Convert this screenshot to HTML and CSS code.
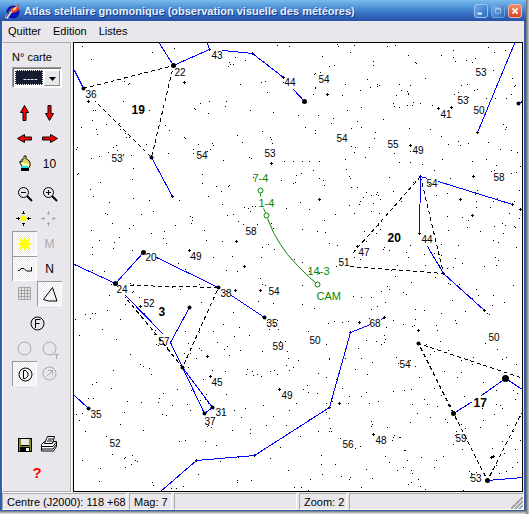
FILE: index.html
```html
<!DOCTYPE html>
<html lang="fr">
<head>
<meta charset="utf-8">
<title>Atlas stellaire gnomonique</title>
<link rel="stylesheet" href="styles.css">
</head>
<body>
<div class="window">
  <header class="titlebar">
    <svg class="logo" viewBox="0 0 16 16" aria-hidden="true"><circle cx="8" cy="9" r="6.500" fill="#0713b8"/><path d="M1 15L7 7" stroke="#d8d8e8" stroke-width="3"/><path d="M1 14L6 7" stroke="#223" stroke-width="1"/><path d="M6 5l4-1 4-3-1 4 2 1-4 3-4 1z" fill="#f0401c"/><path d="M8 6l4-3-1 3-3 2z" fill="#ffe9a0"/></svg>
    <h1>Atlas stellaire gnomonique (observation visuelle des météores)</h1>
    <div class="winbuttons">
      <button class="wb" aria-label="Réduire"><svg viewBox="0 0 14 14"><path d="M3 10h5" stroke="#fff" stroke-width="2"/></svg></button>
      <button class="wb dim" aria-label="Agrandir"><svg viewBox="0 0 14 14"><path d="M4 4.500h6v5H4z" fill="none" stroke="#a9c9f2"/><path d="M4 4h6" stroke="#a9c9f2" stroke-width="2"/></svg></button>
      <button class="wb close" aria-label="Fermer"><svg viewBox="0 0 14 14"><path d="M4 4l6 6M10 4l-6 6" stroke="#fff" stroke-width="2"/></svg></button>
    </div>
  </header>
  <nav class="menu"><button>Quitter</button><button>Edition</button><button>Listes</button></nav>
  <main>
    <aside class="tools">
      <label for="carte">N° carte</label>
      <div class="combo">
        <select id="carte"><option>----</option></select>
        <span class="drop"><svg viewBox="0 0 7 4"><path d="M0 0h7L3.500 4z"/></svg></span>
      </div>
      <div class="grid first">
        <button aria-label="Haut"><svg viewBox="0 0 25 25"><path d="M12.500 4.500l4 7h-2.500v8h-3v-8H8.500z" fill="red" stroke="#000"/></svg></button>
        <button aria-label="Bas"><svg viewBox="0 0 25 25"><path d="M12.500 19.500l4-7h-2.500v-8h-3v8H8.500z" fill="red" stroke="#000"/></svg></button>
        <button aria-label="Gauche"><svg viewBox="0 0 25 25"><path d="M5.500 12.500l7-4v2.500h7v3h-7v2.500z" fill="red" stroke="#000"/></svg></button>
        <button aria-label="Droite"><svg viewBox="0 0 25 25"><path d="M20.500 12.500l-7-4v2.500h-8v3h8v2.500z" fill="red" stroke="#000"/></svg></button>
        <button aria-label="Main"><svg viewBox="0 0 25 25"><path d="M10 18v-3l-2-3v-2l2 1V8h2V5h2v3l2 1 2 2v4l-2 3z" fill="#ffffa8" stroke="#000"/><path d="M12 6v6M14 8v4M16 10v3" stroke="#b9b000"/><path d="M9 15h7v2H9z" fill="#00e8f0"/><path d="M9 17h8v3H9z"/></svg></button>
        <button>10</button>
      </div>
      <div class="grid">
        <button aria-label="Zoom arrière"><svg viewBox="0 0 25 25" fill="none" stroke="#000"><circle cx="11.500" cy="11.500" r="5"/><path d="M9 11.500h5"/><path d="M15 15l5 5" stroke-width="2"/></svg></button>
        <button aria-label="Zoom avant"><svg viewBox="0 0 25 25" fill="none" stroke="#000"><circle cx="11.500" cy="11.500" r="5"/><path d="M9 11.500h5M11.500 9v5"/><path d="M15 15l5 5" stroke-width="2"/></svg></button>
        <button aria-label="Centrer"><svg viewBox="0 0 25 25"><circle cx="11.500" cy="12.500" r="3" fill="#ff0"/><path d="M11.500 5v3M11.500 17v3M4 12.500h4M15 12.500h4M10 7.500h3M10 17.500h3M6.500 11v3M16.500 11v3" stroke="#000"/></svg></button>
        <button aria-label="Recentrer" disabled><svg viewBox="0 0 25 25"><path d="M11.500 5v4M11.500 16v4M4 12.500h4M15 12.500h4M10 7.500h3M10 17.500h3M6.500 11v3M16.500 11v3" stroke="#aaa"/></svg></button>
        <button class="on" aria-label="Soleil"><svg viewBox="0 0 25 25"><circle cx="12.500" cy="13" r="4.500" fill="#ff0"/><path d="M12.500 6v14M5.500 13h14M7 7.500l11 11M18 7.500l-11 11" stroke="#ff0" stroke-width="1.500"/></svg></button>
        <button disabled>M</button>
        <button class="on" aria-label="Trajectoire"><svg viewBox="0 0 25 25"><path d="M6 14.500h1.500l1.500-2h3l2.500 2.500h5v-4" fill="none" stroke="#000"/></svg></button>
        <button>N</button>
        <button aria-label="Grille" disabled><svg viewBox="0 0 25 25"><path d="M6.500 6.500h12v12h-12zM9.500 6v12M12.500 6v12M15.500 6v12M6 9.500h12M6 12.500h12M6 15.500h12" fill="none" stroke="#a4a4a4"/></svg></button>
        <button class="on" aria-label="Triangle"><svg viewBox="0 0 25 25"><path d="M15.500 6.500L6.500 18.500l5 1.500 8.500 0z" fill="none" stroke="#000"/></svg></button>
      </div>
      <div class="grid">
        <button class="wide" aria-label="F"><svg viewBox="0 0 25 25" fill="none" stroke="#000"><circle cx="12.500" cy="12.500" r="6.500"/><path d="M10.500 17V8.500h5M10.500 12.500h4"/></svg></button>
        <button aria-label="Cercle" disabled><svg viewBox="0 0 25 25" fill="none" stroke="#aaa"><circle cx="12.500" cy="12.500" r="6.500"/></svg></button>
        <button aria-label="Cercle T" disabled><svg viewBox="0 0 25 25" fill="none" stroke="#aaa"><circle cx="12.500" cy="12.500" r="6.500"/><path d="M17 18.500h5M19.500 18v5"/></svg></button>
        <button class="on" aria-label="D"><svg viewBox="0 0 25 25" fill="none" stroke="#000"><circle cx="13.500" cy="13.500" r="6.500"/><path d="M11.500 9.500h2l2.500 2.500v3l-2.500 2.500h-2z"/></svg></button>
        <button aria-label="Direction" disabled><svg viewBox="0 0 25 25" fill="none" stroke="#aaa"><circle cx="12.500" cy="12.500" r="6.500"/><path d="M9.500 15.500l6-6M11 9.500h4.500V14"/></svg></button>
      </div>
      <div class="grid files">
        <button aria-label="Enregistrer"><svg viewBox="0 0 25 25"><path d="M6 6h14v14H6z"/><path d="M7 7h2v7h8V7h2v12h-1v-4H8v4H7z" fill="#8a8a1a"/><path d="M9 7h8v6H9z" fill="#e9e7ec"/><path d="M14 16h3v3h-3z" fill="#fff"/></svg></button>
        <button aria-label="Imprimer"><svg viewBox="0 0 25 25" fill="#fff" stroke="#000"><path d="M4.500 12.500l3-3h12v5l-3 4.500h-12z"/><path d="M7.500 11.500l3-7h7l-2 7z"/><path d="M11 7h5M10 9h5M5 14.500h11l3-4M5 17h11l3-4" fill="none"/></svg></button>
        <button class="wide help" aria-label="Aide">?</button>
      </div>
    </aside>
    <section class="map" aria-label="Carte du ciel">
      <svg viewBox="73.500 42.500 448 448" preserveAspectRatio="xMinYMin slice">
        <!-- faint stars -->
        <path class="dots" d="M82 46zM91 59zM152 52zM174 48zM124 81zM128 84zM129 83zM123 101zM93 110zM95 110zM149 110zM92 120zM81 127zM106 124zM119 123zM96 129zM97 134zM120 129zM125 133zM129 137zM77 147zM76 149zM113 147zM116 145zM117 150zM108 152zM99 156zM91 158zM126 137zM131 155zM78 173zM77 174zM100 182zM90 189zM93 196zM109 202zM133 168zM132 179zM133 198zM149 200zM105 213zM107 214zM153 211zM141 214zM190 216zM192 217zM194 108zM195 109zM200 103zM209 101zM225 106zM208 113zM165 125zM169 130zM146 144zM168 153zM184 137zM185 138zM198 144zM212 143zM213 145zM210 149zM207 151zM223 160zM202 174zM202 183zM216 186zM229 185zM221 191zM222 204zM179 200zM208 196zM227 215zM193 149zM193 153z
        M277 45zM289 46zM337 44zM338 46zM354 45zM350 52zM229 62zM230 64zM228 66zM233 64zM245 60zM235 57zM240 84zM261 82zM265 81zM283 82zM267 92zM226 101zM250 110zM273 112zM298 115zM318 115zM333 118zM347 110zM361 107zM367 79zM377 84zM379 85zM373 65zM373 61zM370 87zM360 90zM314 74zM315 73zM315 87zM315 88zM313 94zM322 56zM320 72zM334 65zM345 84zM342 95zM329 66zM262 131zM237 135zM242 142zM270 137zM271 139zM272 143zM305 127zM315 130zM315 133zM331 123zM351 128zM357 121zM361 127zM375 132zM374 138zM369 147zM355 147zM354 152zM351 146zM345 159zM365 157zM346 169zM349 176zM350 178zM383 119zM319 161zM309 161zM293 161zM284 161zM302 161zM313 170zM301 173zM296 175zM295 182zM293 183zM249 157zM251 158zM253 177zM281 180zM228 186zM244 207zM248 208zM250 211zM233 214zM252 206zM255 206zM286 208zM300 202zM323 180zM324 185zM309 209zM319 178zM351 187zM357 187zM366 192zM376 194zM371 195zM373 203zM363 197zM360 201zM359 204zM349 205zM354 213zM335 214zM371 211zM379 213z
        M387 46zM395 45zM408 55zM415 62zM416 63zM441 55zM455 61zM453 57zM453 50zM466 60zM472 62zM475 58zM488 47zM494 52zM505 50zM493 70zM512 78zM515 85zM425 78zM399 84zM401 90zM377 86zM410 85zM407 91zM408 93zM408 94zM396 95zM393 103zM394 106zM399 107zM407 105zM412 105zM413 102zM420 103zM432 105zM454 94zM458 92zM461 85zM467 84zM468 97zM474 90zM477 89zM486 98zM495 98zM506 98zM511 94zM514 86zM503 124zM506 127zM505 129zM500 149zM517 152zM488 142zM511 150zM430 129zM409 128zM441 136zM458 141zM468 143zM460 145zM448 144zM394 153zM399 162zM410 151zM389 177zM410 162zM422 164zM434 170zM442 159zM472 161zM486 159zM491 171zM494 170zM496 165zM511 173zM520 166zM516 172zM377 192zM378 195zM380 199zM393 191zM401 201zM413 182zM429 184zM436 195zM447 193zM450 178zM477 190zM475 194zM476 201zM476 207zM493 201zM490 207zM519 190zM514 201zM497 198zM509 213z
        M192 220zM191 223zM175 225zM164 231zM129 228zM133 225zM112 223zM119 237zM114 242zM113 248zM91 230zM99 240zM92 247zM92 254zM132 250zM151 233zM163 238zM166 243zM204 230zM206 240zM222 241zM190 257zM213 257zM185 269zM178 263zM92 270zM104 271zM111 284zM109 295zM130 283zM133 284zM133 291zM132 292zM172 287zM180 289zM199 284zM201 302zM139 297zM144 313zM125 304zM140 315zM92 313zM95 313zM85 314zM107 310zM90 318zM75 319zM120 319zM102 329zM79 335zM116 339zM155 330zM154 334zM156 344zM158 345zM167 347zM130 354zM113 370zM143 366zM149 368zM140 364zM151 374zM196 358zM188 367zM184 353zM190 353zM188 343zM199 332zM223 324zM213 331zM217 342zM224 349zM229 355zM225 371zM212 370zM226 394zM203 379zM191 390zM206 394zM111 388zM92 384zM96 382zM159 398zM163 393zM177 389zM208 403zM201 350zM185 331zM199 348z
        M238 221zM243 224zM257 224zM271 223zM302 229zM324 220zM317 231zM325 232zM329 243zM337 245zM273 228zM274 249zM268 244zM262 247zM261 257zM294 259zM302 262zM309 271zM319 273zM336 266zM360 259zM232 256zM226 270zM237 271zM262 284zM265 285zM302 285zM260 278zM226 291zM302 304zM314 308zM334 321zM342 322zM328 323zM308 331zM326 344zM348 321zM277 320zM267 322zM274 325zM269 329zM278 329zM239 327zM233 312zM245 304zM258 301zM273 303zM234 336zM249 335zM227 346zM280 341zM285 341zM287 351zM288 358zM240 350zM262 351zM298 360zM274 370zM252 371zM270 371zM247 369zM246 374zM257 374zM261 376zM253 375zM277 374zM286 365zM289 370zM293 367zM318 373zM326 377zM307 385zM308 392zM303 389zM317 393zM329 358zM329 359zM345 358zM355 369zM361 358zM372 362zM367 374zM342 388zM336 379zM349 396zM332 401zM326 403zM348 403zM361 396zM366 392zM378 401zM263 405zM245 408zM289 410zM326 412zM371 309zM353 296zM361 297zM371 297zM377 306zM384 335zM384 342zM366 340zM369 318zM358 348zM364 231zM380 229zM383 249zM366 241zM354 257z
        M376 233zM378 225zM384 247zM389 250zM406 252zM397 265zM410 245zM408 257zM424 254zM434 253zM441 244zM439 265zM447 268zM453 267zM462 263zM455 258zM458 245zM467 227zM468 220zM480 231zM494 226zM502 223zM503 233zM505 225zM493 240zM498 242zM495 257zM498 260zM484 266zM496 265zM516 247zM514 226zM515 227zM519 218zM447 216zM462 217zM448 230zM441 255zM391 270zM395 276zM387 286zM389 289zM381 291zM385 302zM403 292zM406 294zM411 282zM425 265zM435 277zM448 283zM450 284zM459 284zM476 289zM478 295zM472 298zM452 300zM441 313zM465 311zM455 320zM492 305zM489 314zM513 285zM504 302zM493 295zM487 313zM415 309zM424 310zM415 319zM414 325zM393 320zM403 324zM412 326zM436 325zM437 330zM456 323zM440 341zM448 350zM426 344zM430 354zM434 351zM386 327zM381 344zM385 339zM376 341zM396 357zM398 363zM410 360zM415 366zM444 371zM461 360zM467 359zM473 357zM472 364zM506 357zM502 359zM516 364zM497 349zM485 343zM419 377zM411 389zM393 391zM404 390zM434 388zM441 395zM437 406zM424 399zM412 404zM461 372zM457 377zM464 396zM483 382zM496 390zM515 399zM502 408zM496 404zM482 408zM513 390zM517 393z
        M88 398zM93 398zM82 413zM76 414zM79 420zM85 431zM127 401zM141 402zM158 402zM172 405zM187 404zM200 400zM205 399zM124 412zM120 424zM106 436zM143 430zM179 441zM162 414zM166 415zM190 410zM208 425zM211 427zM207 426zM241 417zM250 433zM250 429zM232 430zM224 412zM234 410zM185 440zM205 441zM216 445zM112 454zM124 458zM125 457zM132 455zM135 460zM137 461zM131 464zM125 467zM82 460zM100 468zM99 481zM152 482zM153 485zM176 488zM171 488zM183 486zM198 474zM237 480zM237 482zM251 480zM238 457zM220 461zM249 455z
        M266 425zM273 416zM301 487zM308 490zM310 479zM294 487zM321 455zM321 464zM322 474zM331 431zM330 428zM329 431zM318 431zM340 438zM329 418zM371 421zM372 424zM371 426zM350 440zM355 448zM360 446zM393 437zM399 437zM392 440zM394 435zM404 450zM405 450zM400 437zM378 401zM369 403zM387 427zM407 460zM389 462zM366 469zM350 477zM349 479zM372 478zM335 464zM341 476zM385 456zM427 404zM417 413zM410 422zM403 467zM411 470zM412 473zM408 484zM411 482zM418 479zM420 486zM425 489zM434 467zM436 460zM443 456zM421 457zM397 470zM430 417zM447 422zM461 424zM465 428zM456 431zM453 444zM455 435zM463 490zM469 471zM471 473zM470 477zM476 472zM496 465zM492 469zM492 448zM502 441zM483 420zM480 427zM494 414zM500 405zM507 425zM513 431zM504 453zM515 449zM511 438zM520 440zM506 471zM512 467zM517 462zM499 473zM462 449zM445 419zM361 487zM270 458zM280 447zM288 470zM300 436zM286 425zM296 403zM309 419z"/>
        <!-- slightly brighter stars -->
        <path class="plus" d="M184 81v2M183 82h2M88 100v2M87 101h2M271 162v2M270 163h2M327 93v2M326 94h2M319 198v2M318 199h2M438 107v2M437 108h2M451 106v2M450 107h2M410 144v2M409 145h2M460 198v2M459 199h2M472 214v2M471 215h2M520 208v2M519 209h2M473 175v2M472 176h2M140 305v2M139 306h2M189 249v2M188 250h2M207 355v2M206 356h2M210 375v2M209 376h2M236 240v2M235 241h2M244 265v2M243 266h2M235 289v2M234 290h2M260 289v2M259 290h2M359 321v2M358 322h2M279 388v2M278 389h2M339 402v2M338 403h2M357 245v2M356 246h2M418 329v2M417 330h2M373 433v2M372 434h2M491 456v2M490 457h2M493 455v2M492 456h2M449 404v2M448 405h2M209 48v2M208 49h2M252 52v2M251 53h2M477 131v2M476 132h2M420 175v2M419 176h2M512 203v2M511 204h2M419 232v2M418 233h2M443 272v2M442 273h2M484 309v2M483 310h2M384 316v2M383 317h2M350 331v2M349 332h2M329 406v2M328 407h2M254 454v2M253 455h2M196 459v2M195 460h2M172 195v2M171 196h2M283 76v2M282 77h2"/>
        <path class="dash" d="M83 88L173 65L151 157L95 101M130 285L218 287L182 367L154 332L125 297M420 176L384 217L352 253M420 176L443 273L350 266M520 377L418 343L453 413L487 480L521 413"/>
        <path class="line" d="M159 43L173 65L209 49L207 43M222 50L252 53L283 77M293 89L304 101M74 70L83 88M151 157L172 196M514 43L477 132M518 103L522 101M427 178L420 176L419 233M438 181L512 204M427 246L443 273L484 310M74 264L115 283L143 252M156 257L218 287M231 295L264 317M125 295L163 334M189 307L170 342L182 367L204 413L212 407L182 367M74 395L88 408M160 491L196 460L254 455L329 407L350 332L370 324M381 319L384 317M522 389L505 378L481 395M472 401L453 413M487 480L522 477"/>
        <g class="stars"><circle cx="173" cy="65" r="2.500"/><circle cx="83" cy="88" r="2"/><circle cx="151" cy="157" r="2"/><circle cx="304" cy="101" r="2.500"/><circle cx="518" cy="103" r="2"/><circle cx="115" cy="283" r="2.500"/><circle cx="143" cy="252" r="2.500"/><circle cx="218" cy="287" r="2"/><circle cx="264" cy="317" r="2"/><circle cx="189" cy="307" r="2"/><circle cx="182" cy="367" r="2"/><circle cx="204" cy="413" r="2"/><circle cx="212" cy="407" r="2"/><circle cx="88" cy="408" r="2"/><circle cx="418" cy="343" r="2"/><circle cx="505" cy="378" r="3.500"/><circle cx="453" cy="413" r="2.500"/><circle cx="487" cy="480" r="2.500"/></g>
        <g class="radiant"><path d="M260 193v3M263 208l2 4M267 218L273 232L280 244L287 254L297 265L309 277L315 282"/><circle cx="260" cy="190" r="2.500"/><circle cx="266" cy="215" r="2.500"/><circle cx="317" cy="284" r="2.500"/></g>
        <g class="rtext"><text x="252" y="181">7-4</text><text x="258" y="206">1-4</text><text x="307" y="274">14-3</text><text x="316" y="299">CAM</text></g>
        <g class="mag">
          <text x="211" y="58">43</text><text x="174" y="75">22</text><text x="85" y="97">36</text><text x="111" y="161">53'</text><text x="196" y="158">54</text>
          <text x="284" y="85">44</text><text x="318" y="82">54</text><text x="336" y="141">54</text><text x="264" y="156">53</text>
          <text x="475" y="75">53</text><text x="457" y="103">53</text><text x="473" y="113">50</text><text x="440" y="117">41</text><text x="387" y="147">55</text><text x="412" y="153">49</text><text x="426" y="186">54</text><text x="493" y="180">58</text>
          <text x="421" y="242">44</text><text x="358" y="255">47</text><text x="338" y="265">51</text><text x="145" y="260">20</text><text x="116" y="292">24</text><text x="220" y="296">38</text><text x="190" y="259">49</text><text x="143" y="306">52</text><text x="158" y="344">57</text><text x="211" y="385">45</text><text x="215" y="415">31</text><text x="204" y="424">37</text><text x="90" y="417">35</text><text x="109" y="446">52</text>
          <text x="245" y="234">58</text><text x="268" y="294">54</text><text x="266" y="326">35</text><text x="272" y="349">59</text><text x="309" y="343">50</text><text x="281" y="398">49</text><text x="369" y="326">68</text><text x="342" y="447">56</text><text x="375" y="443">48</text>
          <text x="488" y="340">50</text><text x="399" y="367">54</text><text x="455" y="441">59</text><text x="470" y="481">53</text>
        </g>
        <g class="chart"><text x="131" y="113">19</text><text x="387" y="241">20</text><text x="158" y="315">3</text><text x="473" y="406">17</text></g>
      </svg>
    </section>
  </main>
  <footer class="status">
    <span class="pos">Centre (J2000): 118 +68</span><span class="magn">Mag: 7</span><span class="blank"></span><span class="zoom">Zoom: 2</span><span class="rest"><svg viewBox="0 0 12 12"><path d="M0 12L12 0M4 12l8-8M8 12l4-4" stroke="#a0a0a4" stroke-width="2"/><path d="M2 12L12 2M6 12l6-6M10 12l2-2" stroke="#fff"/></svg></span>
  </footer>
</div>
</body>
</html>
```
FILE: styles.css
```css
* { box-sizing: border-box; }

body {
  margin: 0;
  min-height: 100vh;
  padding: 0 3px 3px 0;
  display: flex;
  background: linear-gradient(90deg, transparent calc(100% - 3px), #666 calc(100% - 3px), #ccc),
    linear-gradient(#666 calc(100% - 3px), #777 calc(100% - 3px), #e8e8e8);
  font: 11px "Liberation Sans", Arial, sans-serif;
  color: #000;
}

button {
  margin: 0;
  padding: 0;
  border: 0;
  background: none;
  font: inherit;
  color: inherit;
}

svg { display: block; }

.window {
  flex: 1;
  min-width: 0;
  display: flex;
  flex-direction: column;
  border: solid #2c60ae;
  border-width: 0 2px 1px;
  background: #e9e7ec;
}

.titlebar {
  height: 21px;
  margin: 0 -2px;
  padding: 0 4px 0 5px;
  display: flex;
  align-items: center;
  gap: 3px;
  background: linear-gradient(#7cbcec, #5a9fe0 25%, #3876c8 60%, #2850a6);
}

.logo { width: 16px; height: 16px; }

.titlebar h1 {
  flex: 1;
  margin: 0;
  font: bold 11px "Liberation Sans", Arial, sans-serif;
  white-space: nowrap;
  color: #e6effc;
  text-shadow: 1px 1px #123c8c;
}

.winbuttons { display: flex; gap: 3px; }

.wb {
  width: 14px;
  height: 14px;
  border: 1px solid #9cc4f0;
  border-radius: 3px;
  background: linear-gradient(135deg, #76aee8, #2c68bc);
}

.wb svg { width: 12px; height: 12px; }
.dim { border-color: #6ea2de; }
.close { border-color: #f0b8a8; background: linear-gradient(#f08c68, #d84420); }

.menu {
  height: 20px;
  padding: 0 6px;
  display: flex;
  align-items: center;
  gap: 12px;
}

main { flex: 1; display: flex; padding-top: 1px; }

.tools {
  width: 69px;
  padding: 8px 0 0 9px;
  border: 1px solid #aaa;
  border-left-color: #fff;
  box-shadow: 1px 1px #fff;
}

.tools label { display: block; height: 15px; line-height: 13px; }

.combo {
  position: relative;
  width: 50px;
  height: 21px;
  margin-top: 1px;
  padding: 2px;
  border: 1px solid;
  border-color: #999 #fff #fff #999;
  background: #fff;
  box-shadow: inset 1px 1px #777;
}

.combo select {
  appearance: none;
  width: 28px;
  height: 15px;
  padding: 0 0 0 7px;
  border: 1px dotted #fff;
  border-radius: 0;
  background: #161c30;
  color: #fff;
  font: inherit;
  line-height: 12px;
}

.drop {
  position: absolute;
  top: 2px;
  right: 1px;
  width: 16px;
  height: 16px;
  padding: 6px 4px;
  border: 1px solid;
  border-color: #fff #888 #888 #fff;
  background: #e9e7ec;
  pointer-events: none;
}

.drop svg { width: 7px; height: 4px; }

.grid {
  display: grid;
  grid-template-columns: 25px 25px;
  grid-auto-rows: 25px;
  margin-top: 5px;
}

.first { margin-top: 13px; }
.files { margin-top: 44px; grid-auto-rows: 28px; align-items: center; }
.grid svg { width: 25px; height: 25px; }
.grid .wide { grid-column: span 2; justify-self: center; width: 25px; }
.grid button { font-size: 12px; }
.grid button:disabled { color: #aaa; }

.grid .on {
  background: repeating-conic-gradient(#fff 0 25%, #ebe9ee 0 50%) 0 0 / 2px 2px;
  box-shadow: inset 1px 1px #999, inset -1px -1px #fff;
}

.grid .help { font: bold 15px "Liberation Sans", sans-serif; color: #f00; }

.map {
  flex: 1;
  min-width: 0;
  margin: 0 1px 0 2px;
  border: 1px solid #000;
  background: #fff;
}

.map svg { width: 100%; height: auto; }
.dots, .plus, .dash, .line { fill: none; stroke: #000; shape-rendering: crispEdges; }
.dots, .plus { stroke-linecap: square; }
.map .dash { stroke-dasharray: 4 3; }
.map .line { stroke: #00f; }
.radiant { fill: none; stroke: #080; }
.rtext { font-size: 11px; fill: #080; }
.mag { font-size: 10px; }
.chart { font-size: 12px; font-weight: bold; }

.status {
  height: 18px;
  padding-top: 1px;
  display: flex;
  gap: 2px;
  line-height: 16px;
  white-space: nowrap;
}

.status span {
  padding-left: 4px;
  border: 1px solid;
  border-color: #aaa #fff #fff #aaa;
}

.pos { width: 125px; }
.magn { width: 43px; }
.blank { width: 123px; }
.zoom { width: 48px; }

.status .rest {
  flex: 1;
  display: flex;
  justify-content: flex-end;
  align-items: flex-end;
}

.rest svg { width: 12px; height: 12px; }
```
